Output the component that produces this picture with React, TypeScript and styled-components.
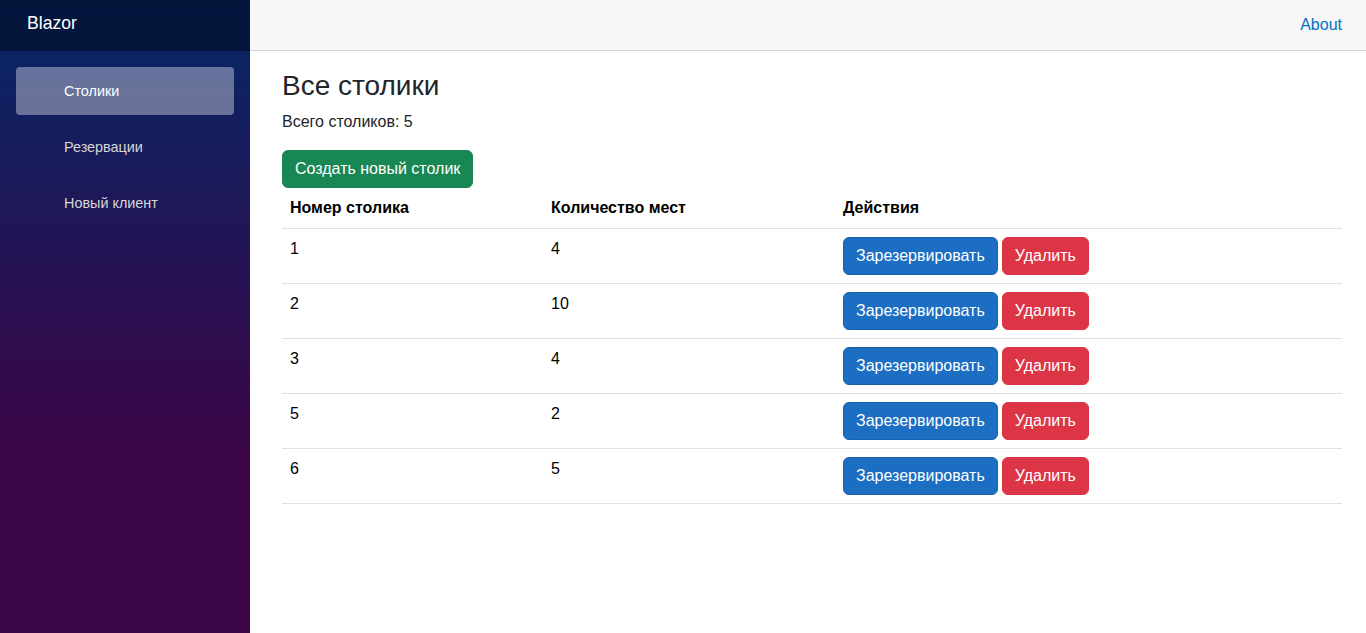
import React from 'react';
import styled, { createGlobalStyle } from 'styled-components';

const GlobalStyle = createGlobalStyle`
  html, body {
    margin: 0;
    padding: 0;
  }

  body {
    font-family: "Liberation Sans", Arial, Helvetica, sans-serif;
    font-size: 16px;
    line-height: 1.5;
    color: #212529;
    background: #fff;
  }

  *, *::before, *::after {
    box-sizing: border-box;
  }
`;

const Page = styled.div`
  display: flex;
  flex-direction: row;
  min-height: 633px;
`;

const Sidebar = styled.div`
  width: 250px;
  flex-shrink: 0;
  background-image: linear-gradient(180deg, rgb(5, 39, 103) 0%, #3a0647 70%);
`;

const BrandRow = styled.div`
  height: 51px;
  display: flex;
  align-items: center;
  padding: 0 0 4px 27px;
  background-color: rgba(0, 0, 0, 0.4);
`;

const Brand = styled.a`
  color: #fff;
  font-size: 17.6px;
  text-decoration: none;
`;

const NavList = styled.ul`
  list-style-type: none;
  margin: 0;
  padding: 16px 16px 0;
`;

const NavItem = styled.li`
  padding-bottom: 8px;
  font-size: 14.4px;
`;

const NavLink = styled.a<{ $active?: boolean }>`
  display: block;
  height: 48px;
  line-height: 48px;
  padding-left: 48px;
  border-radius: 4px;
  color: ${(p) => (p.$active ? '#fff' : '#d7d7d7')};
  background-color: ${(p) => (p.$active ? 'rgba(255, 255, 255, 0.37)' : 'transparent')};
  text-decoration: none;
`;

const Main = styled.main`
  flex: 1;
  display: flex;
  flex-direction: column;
`;

const TopRow = styled.div`
  height: 51px;
  display: flex;
  align-items: center;
  justify-content: flex-end;
  padding-right: 24px;
  background-color: #f7f7f7;
  border-bottom: 1px solid #d6d5d5;
`;

const AboutLink = styled.a`
  color: #0071c1;
  text-decoration: none;
`;

const Content = styled.article`
  padding: 18px 24px 0 32px;
`;

const Title = styled.h3`
  margin: 0 0 7px;
  font-size: 28px;
  font-weight: 500;
  line-height: 1.2;
`;

const Summary = styled.p`
  margin: 0 0 16px;
`;

const Button = styled.button<{ $variant: 'success' | 'primary' | 'danger' }>`
  display: inline-block;
  font-family: inherit;
  font-size: 16px;
  line-height: 1.5;
  padding: 6px 12px;
  border-radius: 6px;
  color: #fff;
  cursor: pointer;
  background-color: ${(p) =>
    p.$variant === 'success' ? '#198754' : p.$variant === 'primary' ? '#1b6ec2' : '#dc3545'};
  border: 1px solid
    ${(p) => (p.$variant === 'success' ? '#198754' : p.$variant === 'primary' ? '#1861ac' : '#dc3545')};
`;

const Table = styled.table`
  width: 100%;
  border-collapse: collapse;
  table-layout: fixed;
  color: #000;
`;

const HeadCell = styled.th<{ $width?: number }>`
  width: ${(p) => (p.$width ? `${p.$width}px` : 'auto')};
  text-align: left;
  font-weight: 700;
  padding: 8px;
  border-bottom: 1px solid #dee2e6;
`;

const Cell = styled.td`
  padding: 8px;
  vertical-align: top;
  border-bottom: 1px solid #dee2e6;
`;

const Actions = styled.div`
  display: flex;
  gap: 4px;
`;

const tables = [
  { id: 1, seats: 4 },
  { id: 2, seats: 10 },
  { id: 3, seats: 4 },
  { id: 5, seats: 2 },
  { id: 6, seats: 5 },
];

const App = () => {
  return (
    <>
      <GlobalStyle />
      <Page>
        <Sidebar>
          <BrandRow>
            <Brand href="#">Blazor</Brand>
          </BrandRow>
          <NavList>
            <NavItem>
              <NavLink href="#" $active>
                Столики
              </NavLink>
            </NavItem>
            <NavItem>
              <NavLink href="#">Резервации</NavLink>
            </NavItem>
            <NavItem>
              <NavLink href="#">Новый клиент</NavLink>
            </NavItem>
          </NavList>
        </Sidebar>
        <Main>
          <TopRow>
            <AboutLink href="#">About</AboutLink>
          </TopRow>
          <Content>
            <Title>Все столики</Title>
            <Summary>Всего столиков: {tables.length}</Summary>
            <Button $variant="success">Создать новый столик</Button>
            <Table>
              <thead>
                <tr>
                  <HeadCell $width={261}>Номер столика</HeadCell>
                  <HeadCell $width={292}>Количество мест</HeadCell>
                  <HeadCell>Действия</HeadCell>
                </tr>
              </thead>
              <tbody>
                {tables.map((t) => (
                  <tr key={t.id}>
                    <Cell>{t.id}</Cell>
                    <Cell>{t.seats}</Cell>
                    <Cell>
                      <Actions>
                        <Button $variant="primary">Зарезервировать</Button>
                        <Button $variant="danger">Удалить</Button>
                      </Actions>
                    </Cell>
                  </tr>
                ))}
              </tbody>
            </Table>
          </Content>
        </Main>
      </Page>
    </>
  );
};

export default App;
